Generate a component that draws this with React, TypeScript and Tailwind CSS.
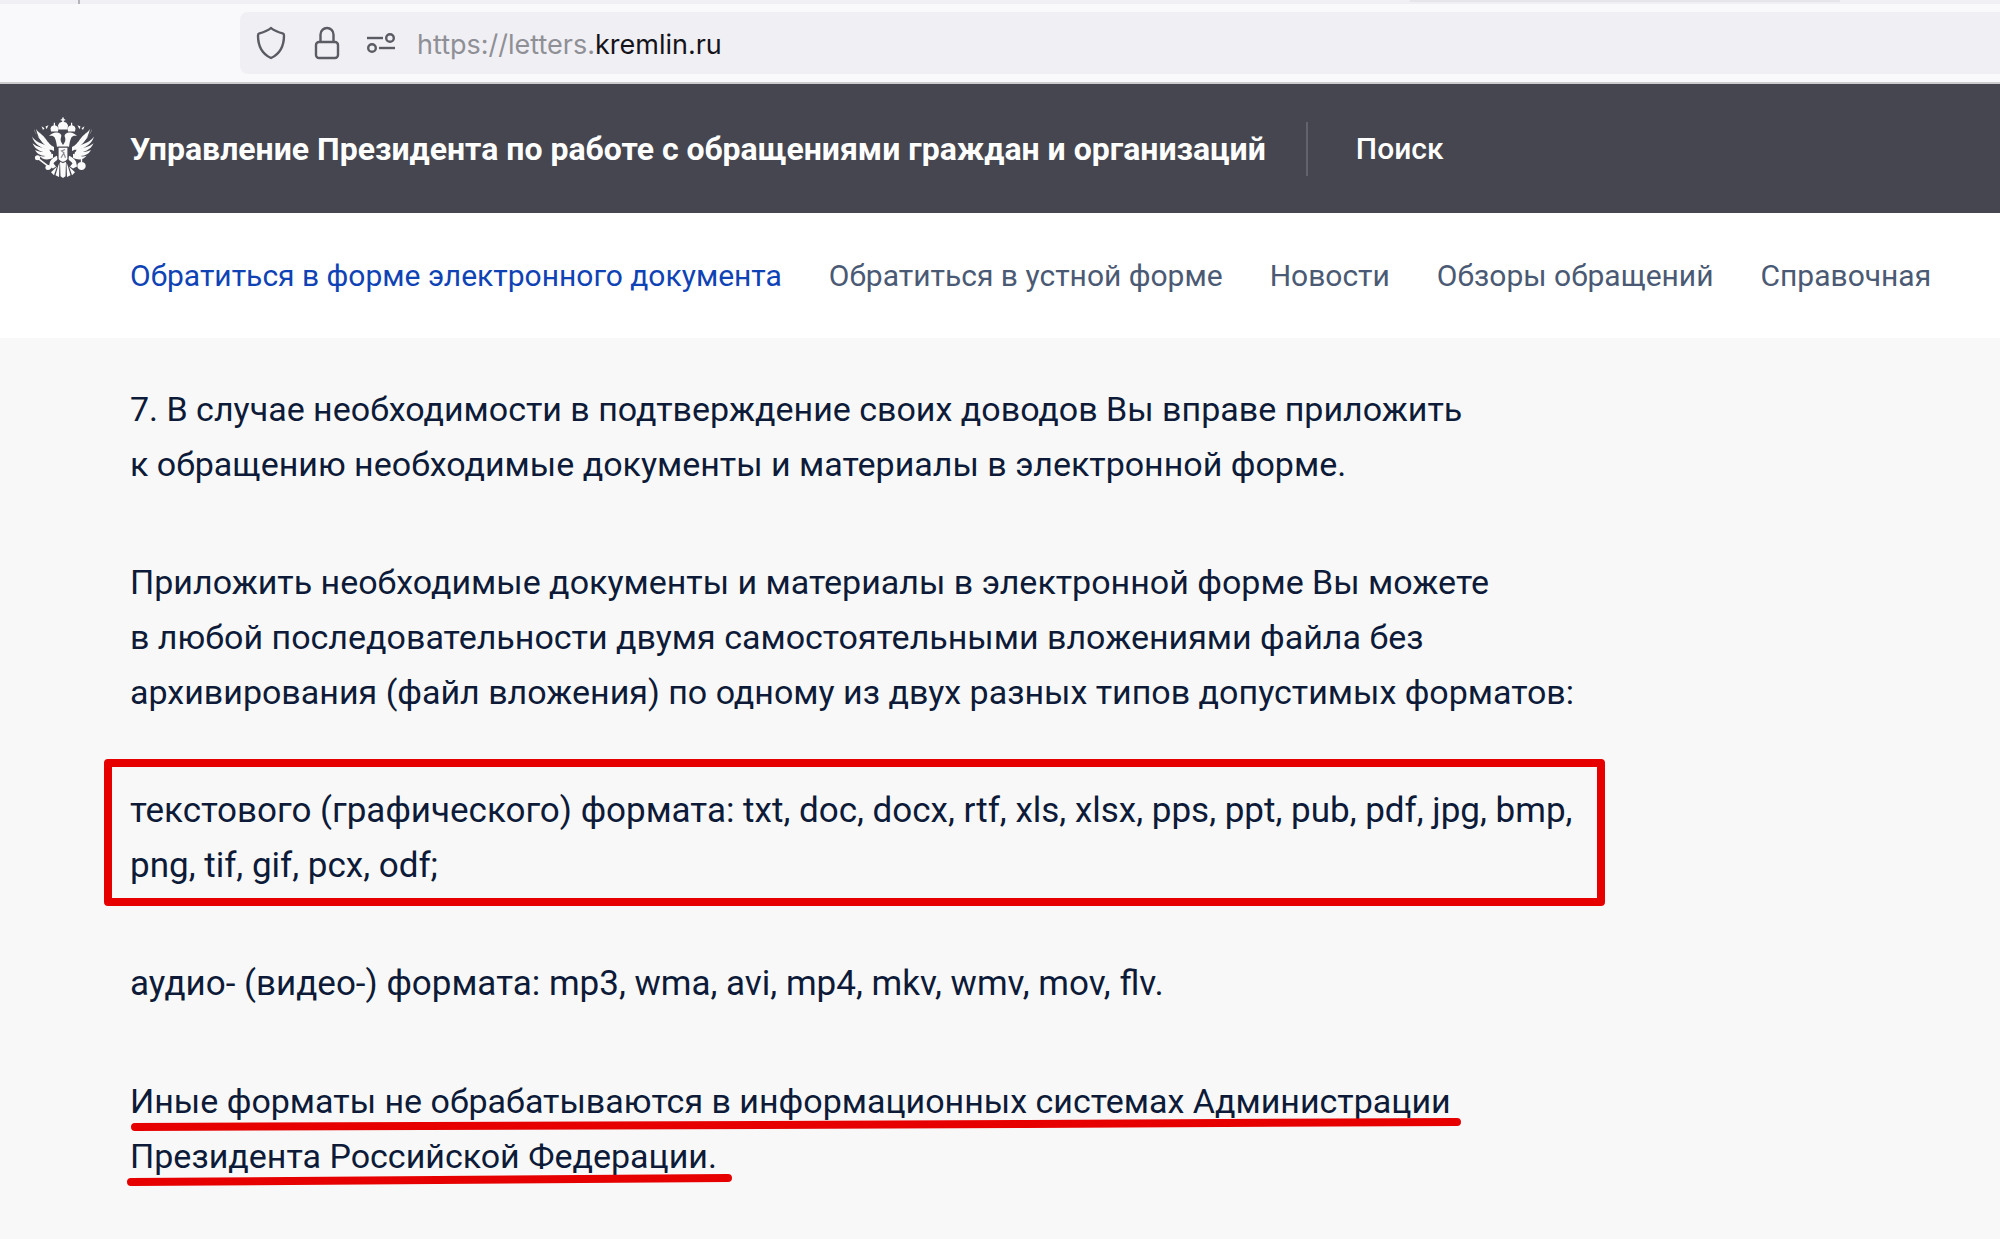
const NAV = [
  { label: 'Обратиться в форме электронного документа', active: true },
  { label: 'Обратиться в устной форме', active: false },
  { label: 'Новости', active: false },
  { label: 'Обзоры обращений', active: false },
  { label: 'Справочная', active: false },
]

function ShieldIcon() {
  return (
    <svg width="30" height="34" viewBox="0 0 30 34" fill="none" stroke="#5b5b64" strokeWidth="2.4" strokeLinejoin="round">
      <path d="M15 2 C16.5 3.6 23 6.6 26.6 7.4 Q28 7.8 28 9.4 C28 20 24.5 27.5 15 32 C5.5 27.5 2 20 2 9.4 Q2 7.8 3.4 7.4 C7 6.6 13.5 3.6 15 2 Z" />
    </svg>
  )
}

function LockIcon() {
  return (
    <svg width="26" height="34" viewBox="0 0 26 34" fill="none" stroke="#5b5b64" strokeWidth="2.4">
      <rect x="2" y="16" width="22" height="16" rx="3" />
      <path d="M6.5 16 V8.5 a6.5 6.5 0 0 1 13 0 V16" />
    </svg>
  )
}

function PermissionsIcon() {
  return (
    <svg width="30" height="22" viewBox="0 0 30 22" fill="none" stroke="#5b5b64" strokeWidth="2.4">
      <path d="M1 6 H17" />
      <circle cx="24" cy="6" r="3.8" />
      <path d="M13 16 H29" />
      <circle cx="6" cy="16" r="3.8" />
    </svg>
  )
}

/** Right half of the coat of arms; the left half is the same shapes mirrored. */
function EagleHalf() {
  return (
    <>
      {/* head and neck */}
      <path d="M32 29 C34 26 35 24 34 21 C33 19 34 16.5 38 16 C41 15.6 43.5 17 46 19.5 C43 19 41.5 19.5 40.5 21 C39 24 38.5 27 38 31 L32 32 Z" />
      {/* side crown */}
      <path d="M37 15 L36.5 11.5 Q37.5 9 40 8.5 V6 H41.2 V8.5 Q44 9 44.5 11.5 L44 15 Z" />
      {/* ribbon */}
      <path d="M46.5 8.5 l3 1.2 l-1 3 z M50.5 11.5 l3 -2 l-1.5 4 z" />
      {/* wing feathers */}
      <path d="M61 12 C60 18 55 23 47 26 L44 31 C52 27 58 21 61 12 Z" />
      <path d="M59 12 C58 15 52 18 49 23 C47 26 45 29 41 31 L41 35 C50 31 57 23 59 12 Z" />
      <path d="M63 20 C60 25 53 28 46 30 L44 34 C53 33 61 28 63 20 Z" />
      <path d="M62.5 27 C58 31 52 32 46 33 L44 37 C52 37 60 34 62.5 27 Z" />
      <path d="M60 34 C55 36.5 50 36 44 36 L43 40 C50 41 57 40 60 34 Z" />
      <path d="M55.5 40 C51 41.5 47 40 42 38 L42 42 C47 45 53 44 55.5 40 Z" />
      {/* leg */}
      <path d="M37 43 C39 46 41 46 41.5 48 L39 51 L42 53 L46 51 L45 46 C43 43 41 41 38 40 Z" />
      {/* tail */}
      <path d="M32 46 L35 46 L34.5 61 L32 63 Z" />
      <path d="M35.5 47 L37 51 L39.5 60 L36 62 Z" />
      <path d="M38 51 L44 57 L41 60 Z" />
    </>
  )
}

function Eagle() {
  return (
    <svg width="64" height="64" viewBox="0 0 64 66" fill="#fafafa" preserveAspectRatio="none" aria-label="Герб">
      <EagleHalf />
      <g transform="matrix(-1 0 0 1 64 0)">
        <EagleHalf />
      </g>
      {/* main crown */}
      <path d="M27.5 13 L27 8.5 Q28 5.5 31.2 5 V3.5 H29.8 V2.2 H31.2 V0.5 H32.8 V2.2 H34.2 V3.5 H32.8 V5 Q36 5.5 37 8.5 L36.5 13 Z" />
      {/* breast shield */}
      <path d="M27 31 H37 V43 Q37 45 32 47 Q27 45 27 43 Z" stroke="#464650" strokeWidth="1.2" />
      <path d="M30 42 L33 37 L30.5 35 L34 33.5 M33 38 L34.5 42" fill="none" stroke="#8a8a92" strokeWidth="1.2" />
      {/* sceptre and orb */}
      <path d="M6 42 L20 53" stroke="#fafafa" strokeWidth="1.6" />
      <circle cx="6.5" cy="42" r="2.6" />
      <circle cx="17" cy="52" r="2.6" />
      <circle cx="50.5" cy="50.5" r="4.2" />
      <path d="M49.8 43 h1.4 v4 h-1.4 z" />
    </svg>
  )
}

function BrowserBar() {
  return (
    <div className="border-b-2 border-[#cccccf] bg-[#f9f9fb]">
      <div className="flex h-1 bg-[#f0eff4]">
        <div className="w-20 border-r-2 border-[#b4b4ba]" />
        <div className="ml-auto mr-40 h-0.5 w-[430px] bg-[#e6e5ea]" />
      </div>
      <div className="flex py-2 pl-60">
        <div className="flex h-[62px] flex-1 items-center rounded-l-lg bg-[#f0eff4] pl-4">
          <button type="button" aria-label="Защита">
            <ShieldIcon />
          </button>
          <button type="button" aria-label="Соединение" className="ml-7">
            <LockIcon />
          </button>
          <button type="button" aria-label="Разрешения" className="ml-[26px]">
            <PermissionsIcon />
          </button>
          <span className="ml-[21px] pt-1 font-[Inter,sans-serif] text-[27px] leading-9 text-[#8f8f96]">
            https://letters.<span className="text-[#15141a]">kremlin.ru</span>
          </span>
        </div>
      </div>
    </div>
  )
}

function SiteHeader() {
  return (
    <header className="flex h-[129px] items-center bg-[#464650] pl-[31px] text-[32px] text-white">
      <a href="#home" className="flex items-center gap-[35px] font-bold">
        <Eagle />
        Управление Президента по работе с обращениями граждан и организаций
      </a>
      <a href="#search" className="ml-10 flex h-[54px] items-center border-l-2 border-[#63636c] pl-12 text-[30px] font-medium">
        Поиск
      </a>
    </header>
  )
}

function SiteNav() {
  return (
    <nav className="flex h-[125px] items-center gap-[47px] bg-white pl-[130px] text-[30px] whitespace-nowrap text-[#4b5a74]">
      {NAV.map(item => (
        <a key={item.label} href="#nav" className={item.active ? 'text-[#0f43b5]' : ''}>
          {item.label}
        </a>
      ))}
    </nav>
  )
}

export default function App() {
  return (
    <div className="min-h-screen overflow-x-hidden bg-[#f8f8f8] font-[Roboto,sans-serif]">
      <BrowserBar />
      <SiteHeader />
      <SiteNav />
      <main className="flex flex-col gap-[63px] pt-11 pl-[130px] text-[34px] leading-[55px] font-[450] whitespace-nowrap text-[#0d1b38]">
        <p>
          7. В случае необходимости в подтверждение своих доводов Вы вправе приложить
          <br />
          к обращению необходимые документы и материалы в электронной форме.
        </p>
        <p>
          Приложить необходимые документы и материалы в электронной форме Вы можете
          <br />
          в любой последовательности двумя самостоятельными вложениями файла без
          <br />
          архивирования (файл вложения) по одному из двух разных типов допустимых форматов:
        </p>
        <p className="relative text-[35px]">
          текстового (графического) формата: txt, doc, docx, rtf, xls, xlsx, pps, ppt, pub, pdf, jpg, bmp,
          <br />
          png, tif, gif, pcx, odf;
          {/* highlight frame */}
          <span className="absolute -top-6 -bottom-[13px] -left-[26px] w-[1501px] rounded border-8 border-[#e60000]" />
        </p>
        <p className="text-[35px]">аудио- (видео-) формата: mp3, wma, avi, mp4, mkv, wmv, mov, flv.</p>
        <p className="relative">
          Иные форматы не обрабатываются в информационных системах Администрации
          <br />
          Президента Российской Федерации.
          <svg
            className="absolute top-0 -left-1 overflow-visible"
            width="1340"
            height="110"
            viewBox="0 0 1340 110"
            fill="none"
            stroke="#e60000"
            strokeWidth="8"
            strokeLinecap="round"
          >
            <path d="M9 53 L900 50 L1331 48" />
            <path d="M5 108 L602 104" />
          </svg>
        </p>
      </main>
    </div>
  )
}
